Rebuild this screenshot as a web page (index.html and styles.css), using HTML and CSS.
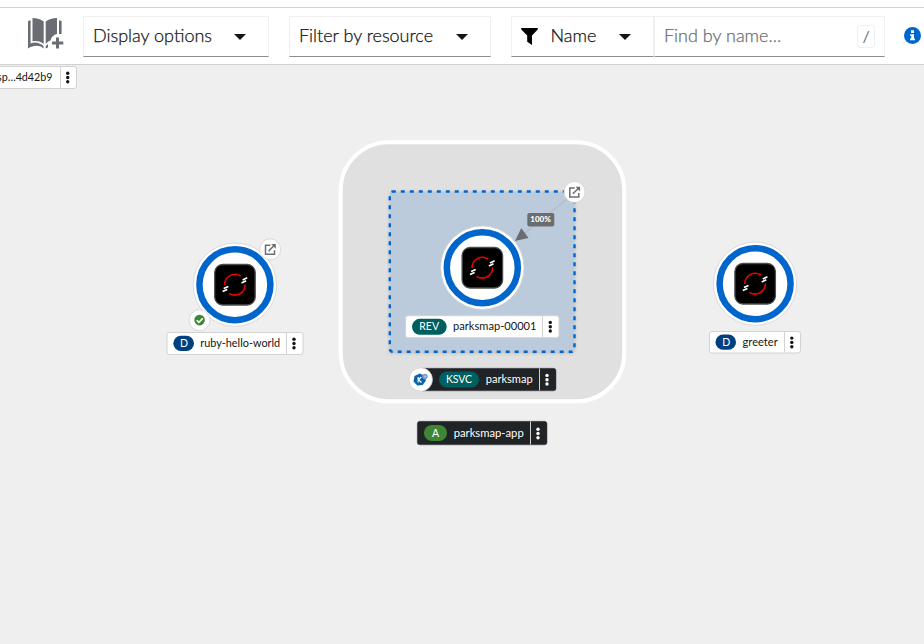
FILE: index.html
```html
<!DOCTYPE html>
<html lang="en">
<head>
<meta charset="utf-8">
<title>Topology</title>
<link rel="stylesheet" href="styles.css">
</head>
<body>
<header class="toolbar">
  <svg class="catalog" width="36" height="32" viewBox="0 0 36 32" aria-hidden="true">
    <path d="M0 3 L2.600 2.200V25.500C7 23.500 11.500 24.500 15.500 28V30.500C11 26.500 5 27.500 0 30.500ZM4.500 0C9 0 13 1.300 15.700 3.500V26C12.500 23 8.500 22.500 4.500 23.300ZM17.700 3.500C20.500 1.300 24.500 0 29 0V16C25.500 16.500 23.500 19 22.500 22.500C20.500 23 19 24.500 17.700 26ZM31 2.200L33.600 3V16H31ZM17.700 28L20 26V29.500L17.700 30.500Z"/>
    <path d="M28 19.500H31V23.500H35.300V26.500H31V30.500H28V26.500H24V23.500H28Z"/>
  </svg>
  <button class="select display"><span>Display options</span><i class="caret"></i></button>
  <button class="select resource"><span>Filter by resource</span><i class="caret"></i></button>
  <div class="search">
    <button class="select name">
      <svg width="17" height="17" viewBox="0 0 17 17" aria-hidden="true"><path d="M0.500 0H16.500Q17.200 .7 16.700 1.500L11 7.500V17L6.200 13.700V7.500L.3 1.500Q-.2 .7 .5 0Z"/></svg>
      <span>Name</span><i class="caret"></i>
    </button>
    <div class="field"><span>Find by name...</span><kbd>/</kbd></div>
  </div>
  <svg class="info" width="17" height="17" viewBox="0 0 17 17" aria-hidden="true">
    <circle cx="8.500" cy="8.500" r="8.500" fill="#06c"/>
    <path d="M7 3.200H10V6H7ZM6 7.200H10V11.500H11V13.200H6V11.500H7.200V8.800H6Z" fill="#fff"/>
  </svg>
</header>
<main>
<svg class="canvas" width="924" height="579" viewBox="0 65 924 579">
  <defs>
    <filter id="shadow" x="-20%" y="-20%" width="140%" height="150%"><feDropShadow dx="0" dy="1" stdDeviation="1.500" flood-opacity=".18"/></filter>
    <g id="workload">
      <circle r="41.700" class="plate"/>
      <circle r="35.500" fill="none" stroke="#06c" stroke-width="6.500"/>
      <rect x="-20.200" y="-20.200" width="40.500" height="40.500" rx="8" fill="#000" stroke="#4a4c4e" stroke-width="1.300"/>
      <path d="M-10.300 .2A10.400 10.400 0 0 1 5.800-8.600M10.300-.2A10.400 10.400 0 0 1-5.800 8.600" fill="none" stroke="#e00" stroke-width="1.500"/>
      <path d="M7.700-4.800L12.300-6.900M6.600-1.700L11.200-3.900M-7.700 4.800L-12.300 6.900M-6.600 1.700L-11.200 3.900" fill="none" stroke="#fff" stroke-width="1.700"/>
    </g>
    <g id="open">
      <circle r="10.500" class="plate"/>
      <path d="M.2-4H-4.700V5H4.300V1M-1.600 1.800L3.700-3.500" fill="none" stroke="#6a6e73" stroke-width="1.500"/>
      <path d="M1-5.200H5.600V-.6Z" fill="#6a6e73"/>
    </g>
    <g id="dots"><circle cy="-4.300" r="1.700"/><circle r="1.700"/><circle cy="4.300" r="1.700"/></g>
  </defs>

  <g class="label">
    <rect x="-20" y="66.500" width="96.500" height="22" rx="2.500" class="box"/>
    <path d="M60.500 67V88" class="rule"/>
    <text x="-3" y="81" textLength="55.500" lengthAdjust="spacingAndGlyphs">sp…4d42b9</text>
    <use href="#dots" x="67.700" y="77.500"/>
  </g>

  <rect x="340.700" y="142.300" width="283.500" height="259" rx="48" fill="#e0e0e0" stroke="#fff" stroke-width="4"/>
  <rect x="389.800" y="191.500" width="184.700" height="160.300" rx="3" class="revision" filter="url(#shadow)"/>
  <path d="M567 199L520 237" stroke="#b8bbbe" stroke-width="1.200"/>
  <path d="M515 241L521.300 228L528.500 238Z" fill="#6a6e73"/>
  <rect x="527.300" y="213" width="27" height="13.400" rx="2" fill="#6a6e73"/>
  <text x="530.300" y="222.300" class="percent" textLength="20.500" lengthAdjust="spacingAndGlyphs">100%</text>
  <use href="#workload" x="482.300" y="267.700"/>
  <use href="#open" x="574.500" y="192"/>
  <g class="label">
    <rect x="405.500" y="315.700" width="153.500" height="22" rx="2.500" class="box"/>
    <path d="M542.500 316V337.500" class="rule"/>
    <rect x="412" y="318.800" width="34.700" height="16" rx="8" fill="#005f60"/>
    <text x="419.300" y="330.400" class="kind" textLength="19.700">REV</text>
    <text x="453" y="330.300" textLength="83.500" lengthAdjust="spacingAndGlyphs">parksmap-00001</text>
    <use href="#dots" x="550.300" y="326.700"/>
  </g>

  <g class="label dark">
    <rect x="420" y="368.300" width="136" height="22.500" rx="2.500" class="box"/>
    <path d="M539.500 368.500V390.500" class="rule"/>
    <circle cx="420.700" cy="379.500" r="11.700" class="plate"/>
    <path d="M419.700 373.500L424.500 375.700L426 380.500L422.700 385L417.300 385.500L413.500 381.500L414.500 376Z" fill="#0865ad"/>
    <circle cx="425" cy="376.500" r="2.700" fill="#7f9ccb"/><circle cx="425" cy="376.500" r="1" fill="#b9c9e6"/>
    <path d="M418.200 377V382.500M421.300 377L418.500 379.800L421.500 382.500" stroke="#fff" fill="none" stroke-width="1.200"/>
    <rect x="439" y="371.500" width="40" height="16" rx="8" fill="#005f60"/>
    <text x="446" y="383.200" class="kind" textLength="26">KSVC</text>
    <text x="485.700" y="383.200" textLength="47" lengthAdjust="spacingAndGlyphs">parksmap</text>
    <use href="#dots" x="547" y="379.700"/>
  </g>

  <g class="label dark">
    <rect x="417.300" y="421.300" width="129.700" height="23.500" rx="2.500" class="box"/>
    <path d="M530.500 421.500V444.500" class="rule"/>
    <rect x="424" y="425" width="23" height="16" rx="8" fill="#3e8635"/>
    <text x="432" y="437" class="kind">A</text>
    <text x="453.700" y="437.200" textLength="70" lengthAdjust="spacingAndGlyphs">parksmap-app</text>
    <use href="#dots" x="538" y="433.500"/>
  </g>

  <use href="#workload" x="234.900" y="284.700"/>
  <use href="#open" x="270.200" y="249.300"/>
  <circle cx="199.600" cy="320.100" r="10.500" class="plate"/>
  <circle cx="199.600" cy="320.100" r="5.300" fill="#3e8635"/>
  <path d="M196.700 320.200L198.900 322.400L202.700 318.400" stroke="#fff" stroke-width="1.600" fill="none"/>
  <g class="label">
    <rect x="167" y="332.500" width="136" height="22" rx="2.500" class="box"/>
    <path d="M286.500 333V354" class="rule"/>
    <rect x="173.300" y="335.700" width="20.700" height="15.300" rx="7.650" fill="#004080"/>
    <text x="180" y="347.300" class="kind">D</text>
    <text x="200.200" y="347.200" textLength="80" lengthAdjust="spacingAndGlyphs">ruby-hello-world</text>
    <use href="#dots" x="294" y="343.500"/>
  </g>

  <use href="#workload" x="755.100" y="283.700"/>
  <g class="label">
    <rect x="709.500" y="331.500" width="91" height="21.500" rx="2.500" class="box"/>
    <path d="M784.500 332V352.500" class="rule"/>
    <rect x="715.500" y="334.500" width="20.500" height="15.300" rx="7.650" fill="#004080"/>
    <text x="722.200" y="346.200" class="kind">D</text>
    <text x="742.500" y="346.200" textLength="35.300" lengthAdjust="spacingAndGlyphs">greeter</text>
    <use href="#dots" x="791.800" y="342.400"/>
  </g>
</svg>
</main>
</body>
</html>
```
FILE: styles.css
```css
* { box-sizing: border-box; }
body {
  margin: 0;
  padding-top: 7px;
  height: 644px;
  overflow: hidden;
  background: #fff;
  color: #151515;
  font-family: Lato, "Liberation Sans", sans-serif;
}
.toolbar {
  display: flex;
  align-items: flex-start;
  height: 58px;
  padding: 8px 0 0 28px;
  border-top: 1px solid #d2d2d2;
  border-bottom: 1px solid #d2d2d2;
}
.catalog { flex: none; margin: 2px 19px 0 0; fill: #6a6e73; }
.select, .field {
  display: flex;
  align-items: center;
  height: 41px;
  margin: 0;
  padding: 0 9px;
  border: 1px solid #f0f0f0;
  border-bottom-color: #8a8d90;
  background: #fff;
  color: #151515;
  font: 300 18px/24px Lato, "Liberation Sans", sans-serif;
  white-space: nowrap;
}
.select span, .field span { margin-top: -3px; -webkit-text-stroke: .25px currentColor; }
.select { flex: none; justify-content: space-between; }
.display { width: 186px; padding-right: 22px; margin-right: 20px; }
.resource { width: 202px; padding-right: 22px; margin-right: 20px; }
.search { display: flex; flex: none; width: 374px; margin-right: 19px; }
.name { width: 143px; padding-right: 22px; }
.name span { margin-right: 10px; }
.field { flex: 1; justify-content: space-between; color: #6a6e73; }
.field kbd {
  width: 18px;
  height: 23px;
  margin-top: -1px;
  border: 1px solid #f0f0f0;
  border-radius: 3px;
  font: 400 16px/19px Lato, sans-serif;
  text-align: center;
}
.caret {
  border: 6px solid transparent;
  border-top-color: #151515;
  border-bottom: 0;
}
.info { flex: none; margin-top: 11px; }
.canvas { display: block; background: #efefef; }
.plate { fill: #fff; stroke: #d2d2d2; stroke-width: .8; }
.revision { fill: #bccbdc; stroke: #06c; stroke-width: 2.400; stroke-dasharray: 4 5; stroke-dashoffset: 1; }
.percent { fill: #fff; font-size: 8px; font-weight: 900; }
.label { font-size: 11.500px; fill: #151515; }
.label .box { fill: #fff; stroke: #d2d2d2; stroke-width: 1; }
.label .rule { stroke: #d2d2d2; }
.label .kind { fill: #fff; font-size: 10.500px; }
.label.dark { fill: #fff; }
.label.dark .box { fill: #212427; stroke: #3c3f42; stroke-width: .5; }
```
